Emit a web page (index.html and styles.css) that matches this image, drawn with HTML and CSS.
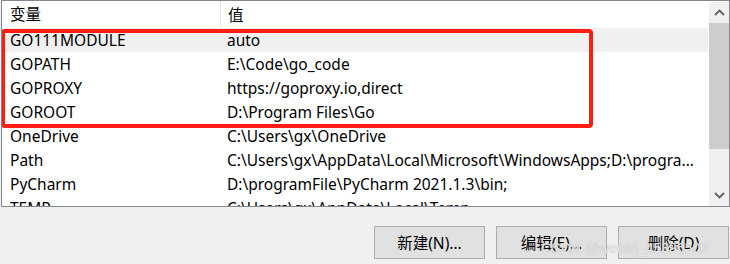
FILE: index.html
```html
<!DOCTYPE html>
<html lang="zh-CN">
<head>
    <meta charset="UTF-8">
    <title>环境变量</title>
    <link rel="stylesheet" href="styles.css">
</head>
<body>

    <!-- variable list -->
    <div class="list">
        <div class="table">
            <div class="row head">
                <div class="cell name">变量</div>
                <div class="cell value">值</div>
            </div>

            <div class="group">
                <div class="row selected">
                    <div class="cell name">GO111MODULE</div>
                    <div class="cell value">auto</div>
                </div>
                <div class="row">
                    <div class="cell name">GOPATH</div>
                    <div class="cell value">E:\Code\go_code</div>
                </div>
                <div class="row">
                    <div class="cell name">GOPROXY</div>
                    <div class="cell value">https://goproxy.io,direct</div>
                </div>
                <div class="row">
                    <div class="cell name">GOROOT</div>
                    <div class="cell value">D:\Program Files\Go</div>
                </div>
            </div>

            <div class="row">
                <div class="cell name">OneDrive</div>
                <div class="cell value">C:\Users\gx\OneDrive</div>
            </div>
            <div class="row">
                <div class="cell name">Path</div>
                <div class="cell value">C:\Users\gx\AppData\Local\Microsoft\WindowsApps;D:\progra...</div>
            </div>
            <div class="row">
                <div class="cell name">PyCharm</div>
                <div class="cell value">D:\programFile\PyCharm 2021.1.3\bin;</div>
            </div>
            <div class="row">
                <div class="cell name">TEMP</div>
                <div class="cell value">C:\Users\gx\AppData\Local\Temp</div>
            </div>
        </div>

        <!-- scrollbar -->
        <div class="scrollbar">
            <div class="arrow">
                <svg width="11" height="7" viewBox="0 0 11 7"><path d="M1 6 L5.5 1.5 L10 6" fill="none" stroke="#606060" stroke-width="1.8"/></svg>
            </div>
            <div class="thumb"></div>
            <div class="track"></div>
            <div class="arrow">
                <svg width="11" height="7" viewBox="0 0 11 7"><path d="M1 1 L5.5 5.5 L10 1" fill="none" stroke="#606060" stroke-width="1.8"/></svg>
            </div>
        </div>
    </div>

    <!-- buttons -->
    <div class="buttons">
        <button>新建(N)...</button>
        <button>编辑(E)...</button>
        <button>删除(D)</button>
        <span class="watermark">CSDN @weixin_45396500</span>
    </div>

</body>
</html>
```

FILE: styles.css
```css
body {
    margin: 0;
    width: 730px;
    height: 264px;
    overflow: hidden;
    background: #f0f0f0;
    font-family: "Noto Sans", "Noto Sans CJK SC", sans-serif;
    font-size: 15.5px;
    color: #000;
}
.list {
    display: flex;
    margin-left: 1px;
    width: 727px;
    height: 205px;
    border: 1px solid #828790;
    background: #fff;
    overflow: hidden;
}
.table {
    flex: 1;
    min-width: 0;
}
.row {
    display: flex;
    height: 24px;
    align-items: center;
    white-space: nowrap;
}
.row.head {
    height: 27px;
}
.row.selected {
    background: #f0f0f0;
}
.cell {
    overflow: hidden;
}
.name {
    width: 210px;
    padding-left: 8px;
}
.value {
    flex: 1;
    padding-left: 7px;
}
.head .name {
    height: 100%;
    line-height: 27px;
    border-right: 1px solid #e5e5e5;
    box-sizing: border-box;
    width: 219px;
}
.group {
    position: relative;
}
/* red marker around the Go variables */
.group::after {
    content: '';
    position: absolute;
    left: -1px;
    top: 1px;
    width: 584px;
    height: 91px;
    border: 4px solid #ff1d14;
    border-radius: 4px;
}
.scrollbar {
    width: 20px;
    margin: 1px 0 0 1px;
    display: flex;
    flex-direction: column;
    background: #f0f0f0;
}
.arrow {
    height: 21px;
    display: flex;
    align-items: center;
    justify-content: center;
}
.thumb {
    height: 126px;
    background: #cdcdcd;
}
.track {
    flex: 1;
}
.buttons {
    position: relative;
    display: flex;
    justify-content: flex-end;
    gap: 11px;
    padding-right: 1px;
    margin-top: 19px;
}
button {
    width: 111px;
    height: 33px;
    background: #e1e1e1;
    border: 1px solid #adadad;
    font-family: "Noto Sans", "Noto Sans CJK SC", sans-serif;
    font-size: 15.5px;
    color: #000;
    padding: 0;
}
.watermark {
    position: absolute;
    right: 22px;
    top: 14px;
    font-family: "Liberation Sans", sans-serif;
    font-size: 14px;
    color: rgba(255, 255, 255, 0.75);
    text-shadow: 0 0 1px #9a9a9a;
    pointer-events: none;
}
```
